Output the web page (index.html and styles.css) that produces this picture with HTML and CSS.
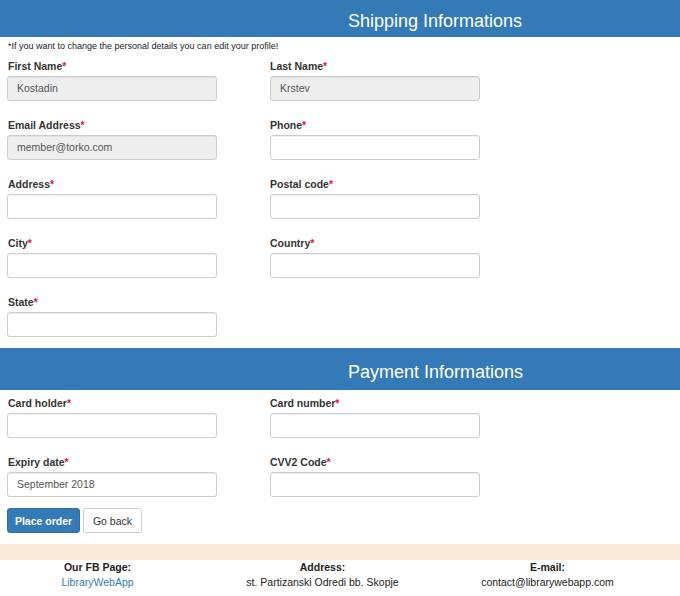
FILE: index.html
```html
<!DOCTYPE html>
<html>
<head>
<meta charset="utf-8">
<link rel="stylesheet" href="styles.css">
</head>
<body>
<div class="section-head head-first"><div></div><h3>Shipping Informations</h3></div>
<p class="note">*If you want to change the personal details you can edit your profile!</p>
<div class="form-grid">
  <div class="group"><label>First Name<span class="req">*</span></label><div class="input ro">Kostadin</div></div>
  <div class="group"><label>Last Name<span class="req">*</span></label><div class="input ro">Krstev</div></div>
  <div class="group"><label>Email Address<span class="req">*</span></label><div class="input ro">member@torko.com</div></div>
  <div class="group"><label>Phone<span class="req">*</span></label><div class="input"></div></div>
  <div class="group"><label>Address<span class="req">*</span></label><div class="input"></div></div>
  <div class="group"><label>Postal code<span class="req">*</span></label><div class="input"></div></div>
  <div class="group"><label>City<span class="req">*</span></label><div class="input"></div></div>
  <div class="group"><label>Country<span class="req">*</span></label><div class="input"></div></div>
  <div class="group"><label>State<span class="req">*</span></label><div class="input"></div></div>
</div>
<div class="section-head head-second"><div></div><h3>Payment Informations</h3></div>
<div class="form-grid pay">
  <div class="group"><label>Card holder<span class="req">*</span></label><div class="input"></div></div>
  <div class="group"><label>Card number<span class="req">*</span></label><div class="input"></div></div>
  <div class="group"><label>Expiry date<span class="req">*</span></label><div class="input">September 2018</div></div>
  <div class="group"><label>CVV2 Code<span class="req">*</span></label><div class="input"></div></div>
</div>
<div class="buttons">
  <button class="btn primary">Place order</button>
  <button class="btn default">Go back</button>
</div>
<div class="band"></div>
<footer class="footer">
  <div class="fcol"><b>Our FB Page:</b><a class="link">LibraryWebApp</a></div>
  <div class="fcol"><b>Address:</b><span>st. Partizanski Odredi bb. Skopje</span></div>
  <div class="fcol"><b>E-mail:</b><span>contact@librarywebapp.com</span></div>
</footer>
</body>
</html>
```
FILE: styles.css
```css
html, body { margin: 0; padding: 0; }
body {
  font-family: "Liberation Sans", Arial, sans-serif;
  color: #333;
  background: #fff;
  width: 680px;
  overflow: hidden;
}
.section-head {
  background: #337ab7;
  color: #fff;
  display: grid;
  grid-template-columns: 348px 1fr;
  align-items: center;
  box-sizing: border-box;
}
.section-head h3 {
  margin: 0;
  font-size: 18px;
  font-weight: normal;
  line-height: 20px;
}
.head-first { height: 37px; padding-top: 4px; }
.head-second { height: 42px; margin-top: 11px; padding-top: 6px; }
.note {
  font-size: 9px;
  margin: 4px 0 0 8px;
  line-height: 11px;
  color: #222;
}
.form-grid {
  display: grid;
  grid-template-columns: 210px 210px;
  column-gap: 53px;
  row-gap: 18px;
  padding: 0 7px;
  margin-top: 8px;
}
.form-grid.pay { margin-top: 7px; }
.group {
  display: flex;
  flex-direction: column;
}
label {
  font-size: 10.5px;
  font-weight: bold;
  line-height: 13px;
  height: 13px;
  margin-bottom: 3px;
  padding-left: 1px;
  color: #333;
}
.group:nth-child(even) label { padding-left: 0; }
.req { color: #e8112d; }
.input {
  height: 25px;
  box-sizing: border-box;
  border: 1px solid #ccc;
  border-radius: 3px;
  background: #fff;
  font-size: 10.5px;
  color: #555;
  padding: 0 9px;
  line-height: 23px;
  box-shadow: inset 0 1px 1px rgba(0,0,0,0.06);
}
.input.ro { background: #eee; }
.buttons {
  display: flex;
  gap: 3px;
  padding: 11px 7px 0;
}
.btn {
  font-family: "Liberation Sans", Arial, sans-serif;
  font-size: 10.5px;
  height: 25px;
  border-radius: 3px;
  padding: 0;
  border: 1px solid;
  box-sizing: border-box;
  white-space: nowrap;
  text-align: center;
}
.btn.primary { background: #337ab7; border-color: #2e6da4; color: #fff; width: 73px; font-weight: bold; }
.btn.default { background: #fff; border-color: #ccc; color: #333; width: 59px; }
.band {
  background: #f9ead6;
  height: 16px;
  margin-top: 11px;
}
.footer {
  display: grid;
  grid-template-columns: 225px 225px 225px;
  margin-left: -15px;
  font-size: 10.5px;
  line-height: 15px;
  text-align: center;
  color: #222;
}
.fcol { display: flex; flex-direction: column; }
.link { color: #337ab7; }
```
